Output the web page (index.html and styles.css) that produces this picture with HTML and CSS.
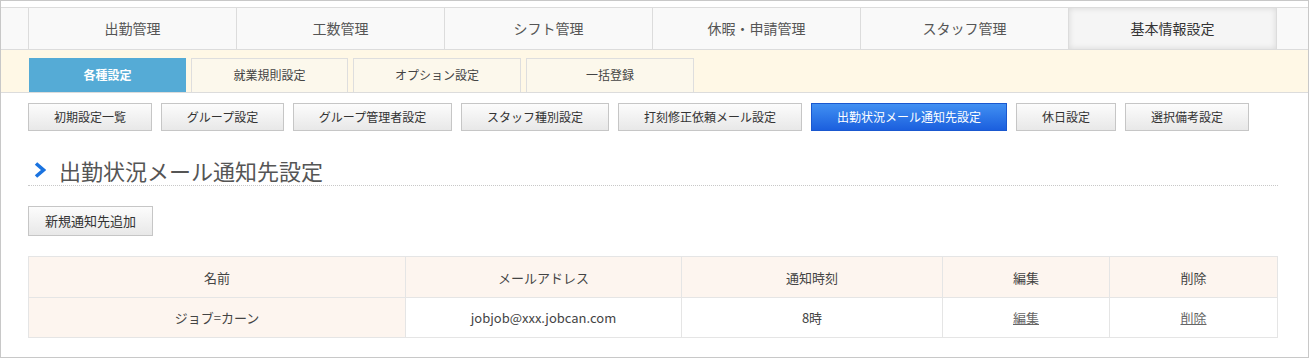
FILE: index.html
```html
<!DOCTYPE html>
<html lang="ja">
<head>
    <meta charset="UTF-8">
    <title>出勤状況メール通知先設定</title>
    <link rel="stylesheet" href="styles.css">
</head>
<body>
    <div class="frame">
        <!-- グローバルナビ -->
        <ul class="gnav">
            <li>出勤管理</li>
            <li>工数管理</li>
            <li>シフト管理</li>
            <li>休暇・申請管理</li>
            <li>スタッフ管理</li>
            <li class="active">基本情報設定</li>
        </ul>

        <!-- サブナビ -->
        <ul class="subnav">
            <li class="current w1">各種設定</li>
            <li class="w1">就業規則設定</li>
            <li class="w2">オプション設定</li>
            <li class="w2">一括登録</li>
        </ul>

        <div class="content">
            <div class="btn-row">
                <a class="btn b1">初期設定一覧</a>
                <a class="btn b2">グループ設定</a>
                <a class="btn b3">グループ管理者設定</a>
                <a class="btn b4">スタッフ種別設定</a>
                <a class="btn b5">打刻修正依頼メール設定</a>
                <a class="btn b6 selected">出勤状況メール通知先設定</a>
                <a class="btn b7">休日設定</a>
                <a class="btn b8">選択備考設定</a>
            </div>

            <h2 class="page-title">
                <svg width="12" height="16" viewBox="0 0 12 16"><path d="M2 1.5 L9.5 8 L2 14.5" fill="none" stroke="#1a73e0" stroke-width="3.6"/></svg>
                出勤状況メール通知先設定
            </h2>

            <a class="btn add-btn">新規通知先追加</a>

            <table class="list">
                <colgroup>
                    <col class="c1"><col class="c2"><col class="c3"><col class="c4"><col>
                </colgroup>
                <tr>
                    <th>名前</th>
                    <th>メールアドレス</th>
                    <th>通知時刻</th>
                    <th>編集</th>
                    <th>削除</th>
                </tr>
                <tr>
                    <td class="name">ジョブ=カーン</td>
                    <td>jobjob@xxx.jobcan.com</td>
                    <td>8時</td>
                    <td><a href="#">編集</a></td>
                    <td><a href="#">削除</a></td>
                </tr>
            </table>
        </div>
    </div>
</body>
</html>
```

FILE: styles.css
```css
/* 全体 */
body {
    margin: 0;
    font-family: "Noto Sans CJK JP", "Noto Sans", sans-serif;
    color: #444;
    background: #fff;
}

.frame {
    box-sizing: border-box;
    height: 358px;
    border: 1px solid #c8c8c8;
    padding-top: 6px;
}

ul {
    list-style: none;
    margin: 0;
    padding: 0;
}

/* グローバルナビ */
.gnav {
    display: flex;
    background-color: #f9f9f9;
    border-top: 1px solid #dcdcdc;
    border-bottom: 1px solid #dcdcdc;
    padding-left: 27px;
}

.gnav li {
    width: 207px;
    height: 41px;
    line-height: 41px;
    text-align: center;
    font-size: 14px;
    color: #555;
    border-left: 1px solid #dcdcdc;
}

.gnav li.active {
    background-color: #f5f5f5;
    color: #333;
    border-right: 1px solid #dcdcdc;
    box-shadow: inset 0 0 6px rgba(0, 0, 0, 0.12);
}

/* サブナビ */
.subnav {
    display: flex;
    gap: 5px;
    background-color: #fff8e6;
    border-bottom: 1px solid #dcdcdc;
    padding: 8px 0 0 28px;
}

.subnav li {
    box-sizing: border-box;
    height: 34px;
    line-height: 32px;
    text-align: center;
    font-size: 12px;
    color: #444;
    background-color: #fcf8ec;
    border: 1px solid #dedede;
    border-bottom: none;
}

.subnav .w1 { width: 157px; }
.subnav .w2 { width: 168px; }

.subnav li.current {
    background-color: #55abd6;
    border-color: #55abd6;
    color: #fff;
    font-weight: bold;
}

/* コンテンツ */
.content {
    padding: 10px 30px 0 27px;
}

.btn-row {
    display: flex;
    gap: 9px;
}

.btn {
    box-sizing: border-box;
    display: inline-block;
    height: 28px;
    line-height: 26px;
    text-align: center;
    font-size: 12px;
    color: #333;
    border: 1px solid #c6c6c6;
    background: linear-gradient(#fcfcfc, #e8e8e8);
    cursor: pointer;
}

.b1 { width: 124px; }
.b2 { width: 123px; }
.b3 { width: 159px; }
.b4 { width: 148px; }
.b5 { width: 184px; }
.b6 { width: 196px; }
.b7 { width: 100px; }
.b8 { width: 124px; }

.btn.selected {
    background: linear-gradient(#4190f2, #1b5fde);
    border-color: #1a58cf;
    color: #fff;
}

/* 見出し */
.page-title {
    box-sizing: border-box;
    margin: 24px 0 0 0;
    padding: 0 0 0 6px;
    height: 31px;
    font-size: 22px;
    font-weight: normal;
    color: #555;
    border-bottom: 1px dotted #c8c8c8;
    display: flex;
    align-items: center;
    gap: 13px;
}

.add-btn {
    margin-top: 20px;
    width: 125px;
    height: 30px;
    line-height: 28px;
    font-size: 13px;
}

/* 一覧テーブル */
.list {
    margin-top: 20px;
    width: 100%;
    border-collapse: collapse;
    table-layout: fixed;
    font-size: 13px;
}

.list .c1 { width: 377px; }
.list .c2 { width: 276px; }
.list .c3 { width: 261px; }
.list .c4 { width: 167px; }

.list th,
.list td {
    padding: 0;
    border: 1px solid #e5e5e5;
    text-align: center;
    font-weight: normal;
    color: #444;
}

.list th {
    height: 40px;
    background-color: #fdf5ef;
}

.list td {
    height: 39px;
}

.list td.name {
    background-color: #fdf5ef;
}

.list a {
    color: #666;
}
```
